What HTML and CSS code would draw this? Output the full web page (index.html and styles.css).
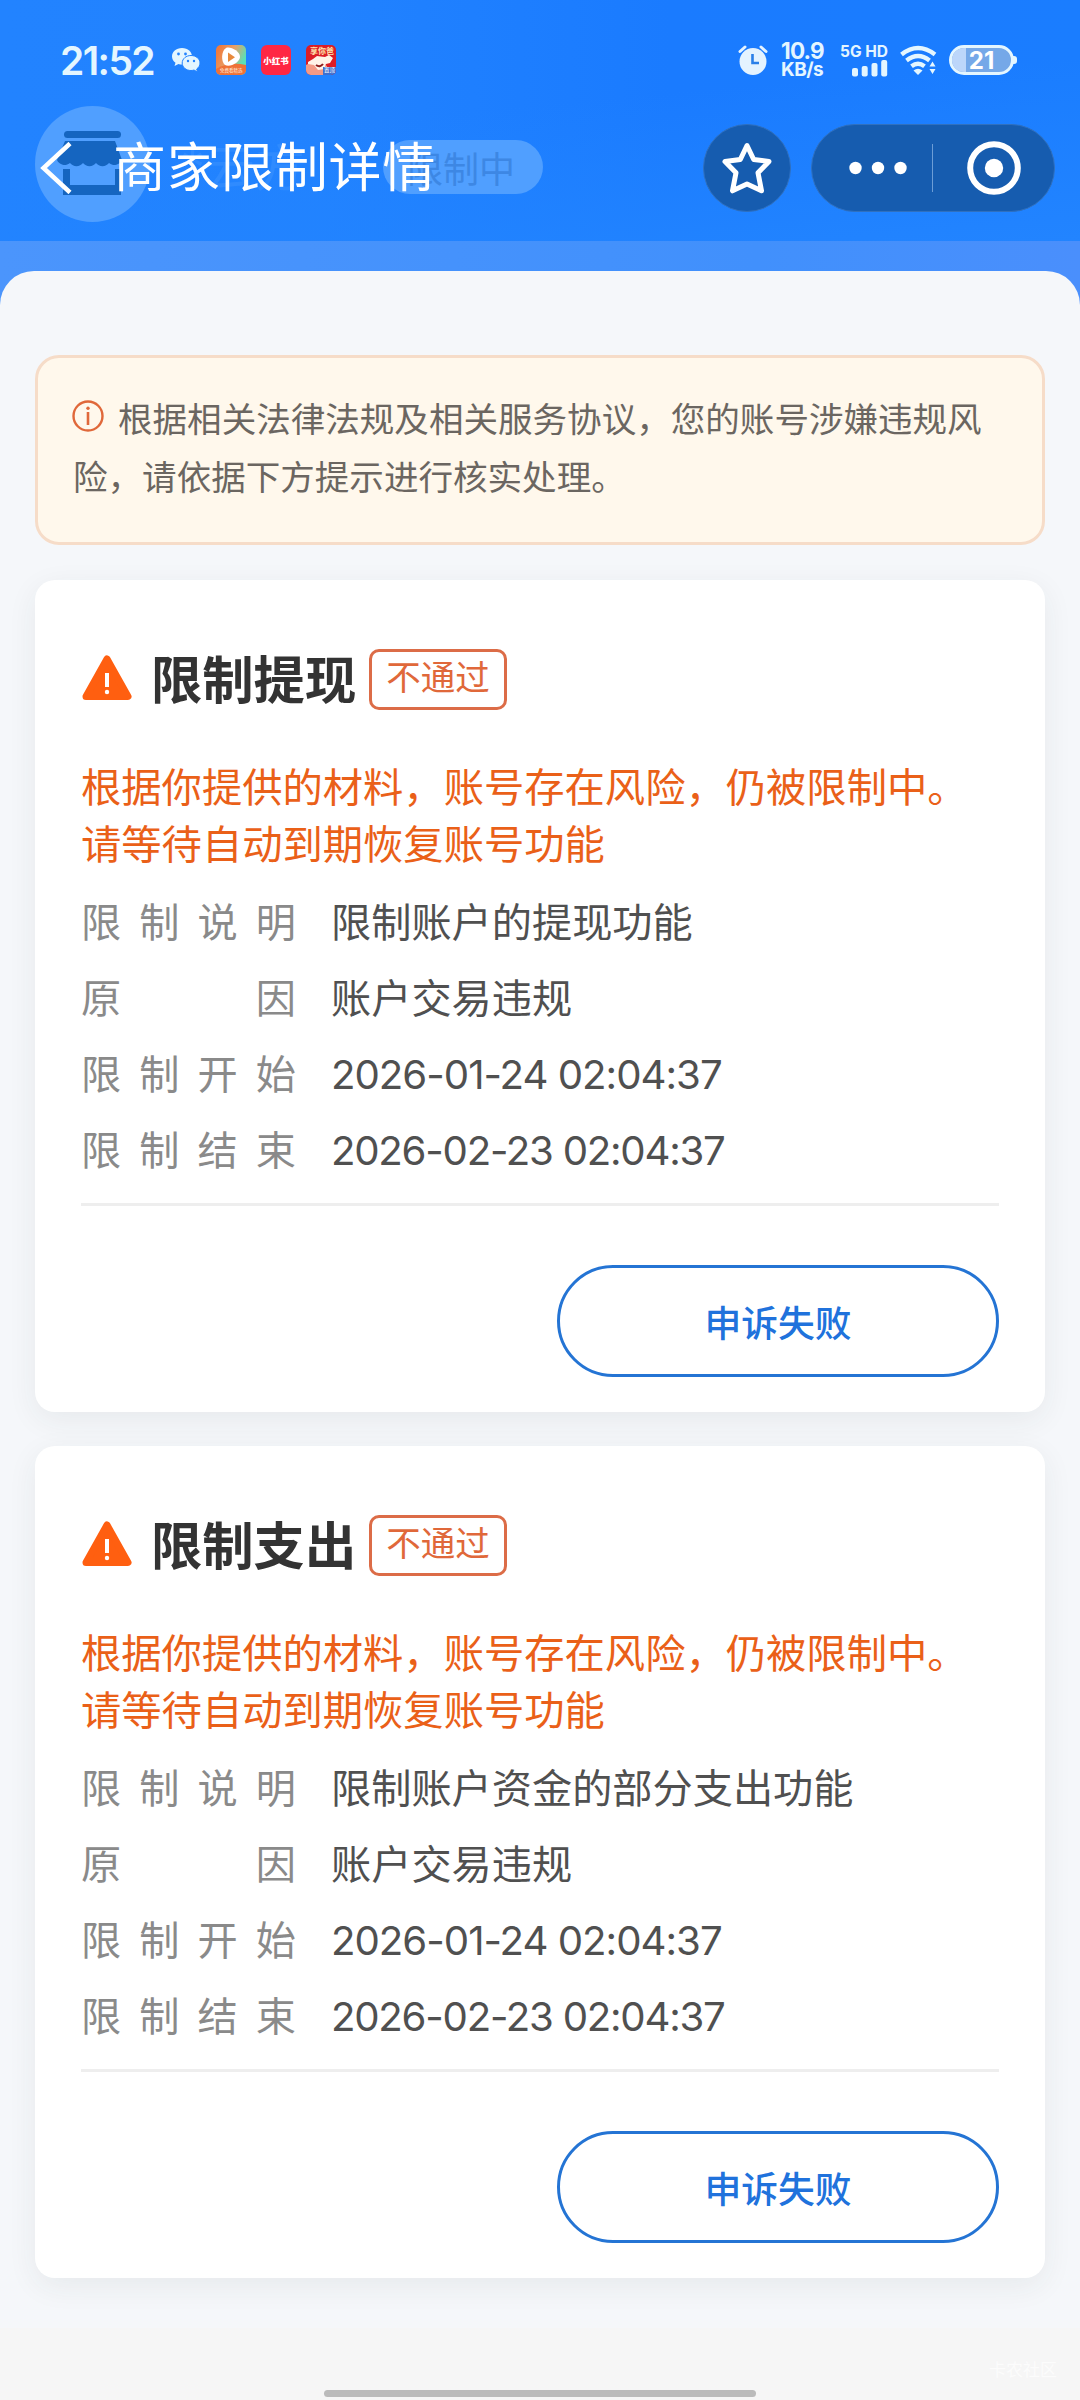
FILE: index.html
```html
<!DOCTYPE html>
<html lang="zh-CN">
<head>
<meta charset="utf-8">
<title>商家限制详情</title>
<link rel="stylesheet" href="styles.css">
</head>
<body>
<div class="screen">
  <header class="header">
    <div class="statusbar">
      <span class="clock">21:52</span>
      <svg class="wechat" width="30" height="26" viewBox="0 0 30 26">
        <path d="M11 1C5 1 1 5 1 9.500c0 2.600 1.300 4.800 3.500 6.300L3.500 19l4-2c1 .4 2.300.6 3.500.6C17 17.600 21 14 21 9.500S17 1 11 1z" fill="#e4f6ff"/>
        <path d="M20 8.500c-5 0-8.800 3.300-8.800 7.500s3.800 7.500 8.800 7.500c1.100 0 2.100-.2 3-.5l3.500 2-.8-3c2-1.400 3.300-3.500 3.300-6 0-4.200-4-7.500-9-7.500z" fill="#e4f6ff" stroke="#2283ff" stroke-width="1"/>
        <circle cx="7.500" cy="7" r="1.400" fill="#2283ff"/><circle cx="14.500" cy="7" r="1.400" fill="#2283ff"/>
        <circle cx="17" cy="14" r="1.200" fill="#2283ff"/><circle cx="23" cy="14" r="1.200" fill="#2283ff"/>
      </svg>
      <span class="app app-video">
        <svg width="30" height="30" viewBox="0 0 30 30">
          <path d="M0 24C10 18 20 18 30 20v10H0z" fill="#ef7136"/>
          <path d="M10 3C5 6 5 17 9 20c5 3 15-3 15-8C24 6 14 1 10 3z" fill="#fff"/>
          <path d="M12 7.500v9.500l7-4.700z" fill="#e88a3c"/>
        </svg>
        <span class="app-caption">免费看精选</span>
      </span>
      <span class="app app-red">小红书</span>
      <span class="app app-game">
        <svg width="30" height="30" viewBox="0 0 30 30">
          <path d="M0 20l10-5 11 6v9H0z" fill="#f49a86"/>
          <path d="M2 17l5-3 4-3 8 1 4-2 4 3-3 5-4 1-2 5-6 1-4-5-6-1z" fill="#fff3e8"/>
          <path d="M10 20q4 3 7-1" stroke="#8c1b1b" stroke-width="2" fill="none"/>
          <path d="M17 22h13v8H17z" fill="#3d6fd0"/>
        </svg>
        <span class="game-title">享你爸</span><span class="game-tag">置顶</span>
      </span>
      <div class="status-right">
        <svg width="30" height="30" viewBox="0 0 30 30">
          <circle cx="15" cy="16.500" r="13.500" fill="#e4f3ff"/>
          <path d="M2 6.500L7 2M28 6.500L23 2" stroke="#e4f3ff" stroke-width="3" stroke-linecap="round"/>
          <path d="M14.500 9v9h6.500" stroke="#2a7fe8" stroke-width="2.600" fill="none"/>
        </svg>
        <div class="speed"><span class="speed-num">10.9</span><span class="speed-unit">KB/s</span></div>
        <div class="signal">
          <span class="signal-type">5G HD</span>
          <svg width="36" height="17" viewBox="0 0 36 17" fill="#e4f6ff">
            <rect x="0" y="8" width="6" height="8.500" rx="2"/><rect x="9.700" y="6" width="6" height="10.500" rx="2"/><rect x="19.500" y="3" width="6" height="13.500" rx="2"/><rect x="29.200" y="0" width="6" height="16.500" rx="2"/>
          </svg>
        </div>
        <svg class="wifi" width="37" height="30" viewBox="0 0 37 30">
          <g fill="none" stroke="#e4f6ff" stroke-width="4.400">
            <path d="M1.500 9.500q16.500-13 33.500 0"/><path d="M6.500 15.500q11.700-9 23 0"/><path d="M11.500 21.300q6.500-5 13 0"/>
          </g>
          <path d="M13.500 25.500q4.500-3.500 9 0L18 30z" fill="#e4f6ff"/>
          <path d="M29.500 21.500l3-5 3 5zM29.500 24l3 5 3-5z" fill="#e4f6ff"/>
        </svg>
        <div class="battery"><span class="battery-level"></span><span class="battery-num">21</span></div>
      </div>
    </div>

    <div class="shop" aria-hidden="true">
      <span class="shop-avatar">
        <svg width="66" height="66" viewBox="0 0 66 66">
          <rect x="7" y="0" width="57" height="7" rx="3.500" fill="#1565c0"/>
          <path d="M8 10h50l7 19a8.200 8.200 0 0 1-13 3a8.200 8.200 0 0 1-13 0a8.200 8.200 0 0 1-13 0a8.200 8.200 0 0 1-13 0a8.200 8.200 0 0 1-13-3z" fill="#1565c0"/>
          <path d="M6 38h7v16h45V38h6v26H6z" fill="#1565c0"/>
        </svg>
      </span>
      <span class="shop-name">*云方</span>
      <span class="shop-state">限制中</span>
    </div>

    <nav class="navbar">
      <svg class="back" width="32" height="52" viewBox="0 0 32 52"><path d="M30 1.500L3.500 26 30 50.500" fill="none" stroke="#fff" stroke-width="4.500"/></svg>
      <h1 class="title">商家限制详情</h1>
      <div class="nav-actions">
        <span class="favorite">
          <svg width="52" height="54" viewBox="0 0 52 54"><path d="M26 4.500l6.700 14 15.300 2L37 31.800l3.500 18L26 43l-14.500 6.800 3.500-18L4 20.500l15.300-2z" fill="none" stroke="#fff" stroke-width="5" stroke-linejoin="round"/></svg>
        </span>
        <div class="capsule">
          <span class="capsule-part"><svg width="60" height="14" viewBox="0 0 60 14" fill="#fff"><circle cx="7.500" cy="7" r="6.200"/><circle cx="30" cy="7" r="6.200"/><circle cx="52.500" cy="7" r="6.200"/></svg></span>
          <span class="capsule-line"></span>
          <span class="capsule-part"><svg width="54" height="54" viewBox="0 0 54 54"><circle cx="27" cy="27" r="23.800" fill="none" stroke="#fff" stroke-width="6"/><circle cx="27" cy="27" r="9.200" fill="#fff"/></svg></span>
        </div>
      </div>
    </nav>
  </header>

  <main class="panel">
    <section class="notice">
      <svg class="notice-icon" width="32" height="32" viewBox="0 0 32 32"><circle cx="16" cy="16" r="14.500" fill="none" stroke="#e0683a" stroke-width="2.400"/><circle cx="16" cy="8.300" r="1.700" fill="#e0683a"/><path d="M16 12v13" stroke="#e0683a" stroke-width="2.600"/></svg>根据相关法律法规及相关服务协议，您的账号涉嫌违规风险，请依据下方提示进行核实处理。
    </section>

    <article class="card">
      <div class="card-head">
        <svg class="warn" width="50" height="46" viewBox="0 0 50 46"><path d="M25 4L46 41.500H4z" fill="#ff5f10" stroke="#ff5f10" stroke-width="7" stroke-linejoin="round"/><path d="M25 18v14" stroke="#fff" stroke-width="4"/><circle cx="25" cy="37" r="2.200" fill="#fff"/></svg>
        <h2 class="card-title">限制提现</h2>
        <span class="badge">不通过</span>
      </div>
      <p class="message">根据你提供的材料，账号存在风险，仍被限制中。<br>请等待自动到期恢复账号功能</p>
      <dl class="details">
        <dt><span>限</span><span>制</span><span>说</span><span>明</span></dt><dd>限制账户的提现功能</dd>
        <dt><span>原</span><span>因</span></dt><dd>账户交易违规</dd>
        <dt><span>限</span><span>制</span><span>开</span><span>始</span></dt><dd class="date">2026-01-24 02:04:37</dd>
        <dt><span>限</span><span>制</span><span>结</span><span>束</span></dt><dd class="date date-end">2026-02-23 02:04:37</dd>
      </dl>
      <div class="card-foot"><button class="appeal">申诉失败</button></div>
    </article>

    <article class="card">
      <div class="card-head">
        <svg class="warn" width="50" height="46" viewBox="0 0 50 46"><path d="M25 4L46 41.500H4z" fill="#ff5f10" stroke="#ff5f10" stroke-width="7" stroke-linejoin="round"/><path d="M25 18v14" stroke="#fff" stroke-width="4"/><circle cx="25" cy="37" r="2.200" fill="#fff"/></svg>
        <h2 class="card-title">限制支出</h2>
        <span class="badge">不通过</span>
      </div>
      <p class="message">根据你提供的材料，账号存在风险，仍被限制中。<br>请等待自动到期恢复账号功能</p>
      <dl class="details">
        <dt><span>限</span><span>制</span><span>说</span><span>明</span></dt><dd>限制账户资金的部分支出功能</dd>
        <dt><span>原</span><span>因</span></dt><dd>账户交易违规</dd>
        <dt><span>限</span><span>制</span><span>开</span><span>始</span></dt><dd class="date">2026-01-24 02:04:37</dd>
        <dt><span>限</span><span>制</span><span>结</span><span>束</span></dt><dd class="date date-end">2026-02-23 02:04:37</dd>
      </dl>
      <div class="card-foot"><button class="appeal">申诉失败</button></div>
    </article>
  </main>

  <footer class="bottom">
    <span class="watermark">卡农社区</span>
    <span class="homebar"></span>
  </footer>
</div>
</body>
</html>
```
FILE: styles.css
```css
* { box-sizing: border-box; margin: 0; padding: 0; }
body { background: #f6f6f6; font-family: "Inter", "Noto Sans CJK SC", sans-serif; }
svg { display: block; flex: none; }
.screen {
  width: 1080px; height: 2400px; overflow: hidden;
  display: flex; flex-direction: column;
  background: linear-gradient(90deg, #4b95fc, #4190fc 70%, #4a8ffc) 0 0 / 100% 340px no-repeat, #f5f7fa;
}

/* Header */
.header {
  position: relative; height: 241px; flex: none;
  background: linear-gradient(175deg, rgba(34, 132, 255, 0) 45%, #2284ff 100%), linear-gradient(90deg, #2283ff 0%, #2182ff 30%, #1a7bff 62%, #1a7dff 100%);
}
.statusbar {
  height: 120px; padding: 0 63px 0 60px;
  display: flex; align-items: center;
  color: #e4f6ff;
}
.clock { width: 111px; font-size: 39px; font-weight: 600; letter-spacing: -1.600px; white-space: nowrap; }
.wechat { margin-right: 15px; }
.app {
  position: relative; width: 30px; height: 30px; margin-right: 15px;
  border-radius: 5px; overflow: hidden; flex: none; white-space: nowrap;
}
.app-video { background: linear-gradient(115deg, #f07a3c 10%, #e7a168 45%, #58e0b8 80%); }
.app-caption { position: absolute; left: 4px; top: 23px; font-size: 4.500px; line-height: 6px; color: #ffe9dc; }
.app-red {
  background: #ff2743; color: #fff; border-radius: 6px;
  display: flex; align-items: center; justify-content: center;
  font-size: 8.500px; font-weight: 900;
}
.app-game { background: #dc1c26; }
.game-title { position: absolute; left: 4px; top: 1px; font-size: 8px; line-height: 11px; font-weight: 700; color: #ffe8b0; }
.game-tag { position: absolute; left: 18px; top: 22px; font-size: 5.500px; line-height: 7px; color: #fff; }
.status-right { margin-left: auto; display: flex; align-items: center; }
.speed { width: 46px; margin-left: 13px; display: flex; flex-direction: column; font-weight: 700; white-space: nowrap; }
.speed-num { font-size: 22.500px; line-height: 19px; letter-spacing: -0.8px; }
.speed-unit { font-size: 19px; line-height: 20px; font-weight: 700; letter-spacing: -0.5px; }
.signal { width: 49px; margin-left: 12px; display: flex; flex-direction: column; align-items: flex-end; }
.signal-type { font-size: 15.500px; line-height: 17px; font-weight: 700; letter-spacing: 0; white-space: nowrap; }
.wifi { margin-left: 12px; }
.battery {
  position: relative; width: 65px; height: 30px; margin: 0 3px 0 12px;
  border: 3px solid #e4f6ff; border-radius: 15px; background: #75a8e8;
  display: flex; align-items: center; justify-content: center;
}
.battery::after {
  content: ""; position: absolute; right: -6px; top: 8px;
  width: 4px; height: 8px; border-radius: 0 3px 3px 0; background: #e4f6ff;
}
.battery-level { position: absolute; left: 0; top: 0; bottom: 0; width: 14px; border-radius: 12px 0 0 12px; background: #bcd6fa; }
.battery-num { position: relative; font-size: 24px; font-weight: 700; color: #fff; }

/* Merchant strip scrolled beneath the title bar */
.shop { position: absolute; left: 35px; top: 106px; height: 116px; display: flex; align-items: center; }
.shop-avatar {
  width: 115px; height: 116px; border-radius: 50%; background: #509fff;
  display: flex; align-items: center; justify-content: center; padding-right: 6px;
}
.shop-name { width: 233px; padding-left: 30px; font-size: 50px; color: #2f8bff; }
.shop-state {
  width: 160px; height: 54px; border-radius: 27px; background: #509fff; color: #3d87e4;
  padding-right: 28px; margin-top: 5px;
  display: flex; align-items: center; justify-content: flex-end; font-size: 36px;
}
.navbar {
  position: absolute; left: 0; right: 0; top: 124px; height: 88px; padding: 0 25px 0 40px;
  display: flex; align-items: center;
}
.title { margin-left: 41px; font-size: 53px; line-height: 80px; letter-spacing: 0.9px; font-weight: 400; color: #fff; white-space: nowrap; }
.nav-actions { margin-left: auto; margin-top: -1px; display: flex; gap: 20px; }
.favorite, .capsule { height: 88px; border-radius: 44px; background: #165caf; border: 1px solid #3070be; display: flex; align-items: center; justify-content: center; }
.favorite { width: 88px; }
.capsule { width: 244px; }
.capsule-part { flex: 1; display: flex; justify-content: center; }
.capsule-part:first-child { flex: none; width: 120px; padding-left: 12px; }
.capsule-line { width: 1px; height: 48px; background: #6c9dd6; }

/* Content */
.panel {
  margin-top: 30px; padding: 84px 35px 0; height: 2057px; flex: none;
  border-radius: 34px 34px 0 0; background: #f5f7fa;
}
.notice {
  height: 190px; margin-bottom: 35px; padding: 33px 36px 0 35px;
  border: 3px solid #f6dcc8; border-radius: 24px; background: #fff8ec;
  font-size: 34.550px; line-height: 58px; color: #6b6661;
}
.notice-icon { display: inline-block; vertical-align: 0; margin: 0 14px 0 -1px; }
.card {
  height: 832px; margin-bottom: 34px; padding: 69px 46px 0 46px;
  border-radius: 20px; background: #fff;
  box-shadow: 0 8px 30px rgba(40, 50, 60, .07);
}
.card-head { height: 61px; display: flex; align-items: center; }
.warn { margin: -4px 0 0 1px; }
.card-title { margin-left: 19px; width: 218px; font-size: 51.300px; line-height: 60px; font-weight: 700; color: #333; white-space: nowrap; }
.badge {
  width: 138px; height: 61px; border: 3px solid #dc6c47; border-radius: 10px;
  font-size: 34.500px; line-height: 52px; text-align: center; color: #e0683a; white-space: nowrap;
}
.message { margin-top: 49px; font-size: 40.300px; line-height: 57px; color: #ea6018; white-space: nowrap; }
.details {
  display: grid; grid-template-columns: 215px 1fr; column-gap: 35px; grid-auto-rows: 76px;
  align-items: center; margin-top: 12px; padding-bottom: 14px;
  border-bottom: 3px solid #eee;
  font-size: 40.200px; line-height: 60px; color: #505050;
}
.details dt { display: flex; justify-content: space-between; color: #8a8a8a; }
.date { letter-spacing: -1px; white-space: nowrap; }
.date-end { letter-spacing: -1.250px; }
.card-foot { display: flex; justify-content: flex-end; padding-top: 59px; }
.appeal {
  width: 442px; height: 112px; border: 3px solid #2474d4; border-radius: 56px; background: #fff;
  font-family: inherit; font-size: 36.800px; font-weight: 500; color: #2072dc;
}

/* Bottom */
.bottom { flex: 1; display: flex; flex-direction: column; align-items: center; justify-content: flex-end; padding-bottom: 3px; background: #f6f6f6; }
.watermark { align-self: flex-end; margin-right: 23px; margin-bottom: 9px; font-size: 17px; line-height: 22px; color: #fcfcfc; }
.homebar { width: 432px; height: 7px; border-radius: 4px; background: #bbb; }
```
